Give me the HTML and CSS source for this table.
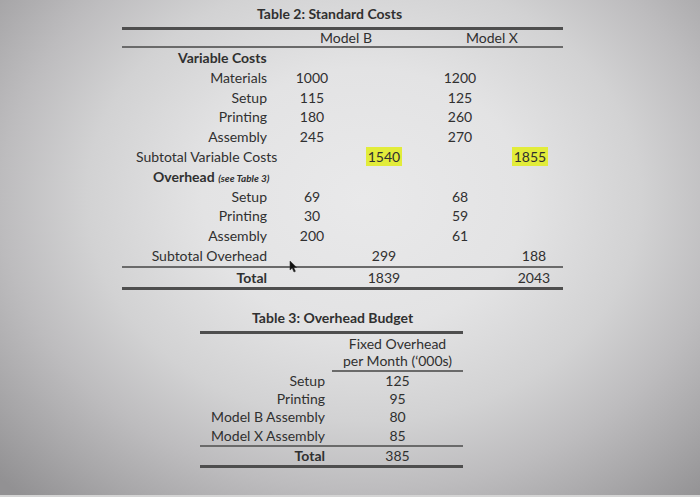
FILE: index.html
```html
<!DOCTYPE html>
<html>
<head>
<meta charset="utf-8">
<link rel="stylesheet" href="styles.css">
</head>
<body>
<div class="screen">
  <section class="t2">
    <div class="t2-title">Table 2: Standard Costs</div>
    <div class="rule rule-thick"></div>
    <div class="row head">
      <span class="h-b">Model B</span>
      <span class="h-x">Model X</span>
    </div>
    <div class="rule rule-mid"></div>
    <div class="row"><span class="lbl bold vc">Variable Costs</span></div>
    <div class="row"><span class="lbl">Materials</span><span class="c1">1000</span><span class="c3">1200</span></div>
    <div class="row"><span class="lbl">Setup</span><span class="c1">115</span><span class="c3">125</span></div>
    <div class="row"><span class="lbl">Printing</span><span class="c1">180</span><span class="c3">260</span></div>
    <div class="row"><span class="lbl">Assembly</span><span class="c1">245</span><span class="c3">270</span></div>
    <div class="row"><span class="lbl sub">Subtotal Variable Costs</span><span class="c2"><span class="hl">1540</span></span><span class="c4"><span class="hl">1855</span></span></div>
    <div class="row"><span class="lbl oh"><b>Overhead</b> <i>(see Table 3)</i></span></div>
    <div class="row"><span class="lbl">Setup</span><span class="c1">69</span><span class="c3">68</span></div>
    <div class="row"><span class="lbl">Printing</span><span class="c1">30</span><span class="c3">59</span></div>
    <div class="row"><span class="lbl">Assembly</span><span class="c1">200</span><span class="c3">61</span></div>
    <div class="row"><span class="lbl">Subtotal Overhead</span><span class="c2">299</span><span class="c4 c4b">188</span></div>
    <div class="rule rule-mid"></div>
    <div class="row total"><span class="lbl bold">Total</span><span class="c2">1839</span><span class="c4 c4b">2043</span></div>
    <div class="rule rule-thick"></div>
    <svg class="cursor" width="9" height="13" viewBox="0 0 9 13"><path d="M1 1 L1 10 L3.2 8 L5 12 L6.4 11.3 L4.7 7.6 L7.6 7.4 Z" fill="#111" stroke="#333" stroke-width="0.6"/></svg>
  </section>

  <section class="t3">
    <div class="t3-title">Table 3: Overhead Budget</div>
    <div class="rule rule-thick"></div>
    <div class="r3 head3"><span class="l3"></span><span class="v3 hv">Fixed Overhead<br>per Month (‘000s)</span></div>
    <div class="r3"><span class="l3">Setup</span><span class="v3">125</span></div>
    <div class="r3"><span class="l3">Printing</span><span class="v3">95</span></div>
    <div class="r3"><span class="l3">Model B Assembly</span><span class="v3">80</span></div>
    <div class="r3"><span class="l3">Model X Assembly</span><span class="v3">85</span></div>
    <div class="rule rule-mid3"></div>
    <div class="r3 tot3"><span class="l3 bold">Total</span><span class="v3">385</span></div>
    <div class="rule rule-thick"></div>
  </section>
</div>
</body>
</html>
```

FILE: styles.css
```css
html, body {
  margin: 0;
  padding: 0;
}
body {
  width: 700px;
  height: 497px;
  overflow: hidden;
  font-family: Lato, "Open Sans", sans-serif;
  font-size: 14px;
  color: #303030;
}
.screen {
  width: 700px;
  height: 497px;
  box-sizing: border-box;
  padding-top: 4px;
  background: radial-gradient(ellipse 72% 82% at 52% 40%, #e9e9ea 0%, #e3e3e4 32%, #d2d2d3 55%, #bdbcbe 72%, #a8a7a9 86%, #929193 100%);
  border-bottom: 2px solid #d4d4d4;
}
.bold { font-weight: 700; }

/* Table 2 */
.t2 {
  position: relative;
  margin-left: 122px;
  width: 441px;
}
.t2-title {
  height: 20px;
  line-height: 20px;
  padding-left: 135px;
  font-weight: 700;
  font-size: 14px;
  margin-bottom: 3px;
}
.rule-thick { height: 3px; background: #4e4e4e; }
.rule-mid { height: 2px; background: #6a6a6a; }
.row {
  display: grid;
  grid-template-columns: 145px 90px 54px 98px 42px 12px;
  height: 19.8px;
  line-height: 19.8px;
  white-space: nowrap;
}
.row.head {
  height: 16px;
  line-height: 16px;
  grid-template-columns: 145px 144px 152px;
}
.h-b { grid-column: 2; text-align: center; padding-left: 14px; }
.h-x { grid-column: 3; text-align: center; padding-left: 10px; }
.lbl { grid-column: 1; text-align: right; }
.lbl.vc { text-align: left; padding-left: 56px; }
.lbl.sub { text-align: left; padding-left: 14px; }
.lbl.oh { text-align: left; padding-left: 31px; }
.lbl.oh b { font-weight: 700; }
.lbl.oh i { font-weight: 700; font-size: 10px; }
.c1, .c2, .c3, .c4 { text-align: center; }
.c1 { grid-column: 2; }
.c2 { grid-column: 3; }
.c3 { grid-column: 4; }
.c4 { grid-column: 5; }
.c4b { padding-left: 8px; }
.row.total { height: 19px; line-height: 19px; }
.hl {
  display: inline-block;
  background: #e2ec3a;
  padding: 0 2px;
  line-height: 19px;
}
.cursor {
  position: absolute;
  left: 167px;
  top: 256px;
}

/* Table 3 */
.t3 {
  margin-left: 200px;
  width: 263px;
  margin-top: 18px;
}
.t3-title {
  height: 20px;
  line-height: 20px;
  padding-left: 52px;
  font-weight: 700;
  margin-bottom: 3px;
}
.r3 {
  display: grid;
  grid-template-columns: 132px 131px;
  height: 18.3px;
  line-height: 18.3px;
  white-space: nowrap;
}
.l3 { text-align: right; padding-right: 7px; }
.v3 { text-align: center; }
.head3 { height: auto; line-height: 17.5px; }
.hv { border-bottom: 2px solid #6a6a6a; padding-top: 1px; }
.rule-mid3 { height: 2px; background: #6a6a6a; }
.tot3 { height: 18px; line-height: 18px; }
```
